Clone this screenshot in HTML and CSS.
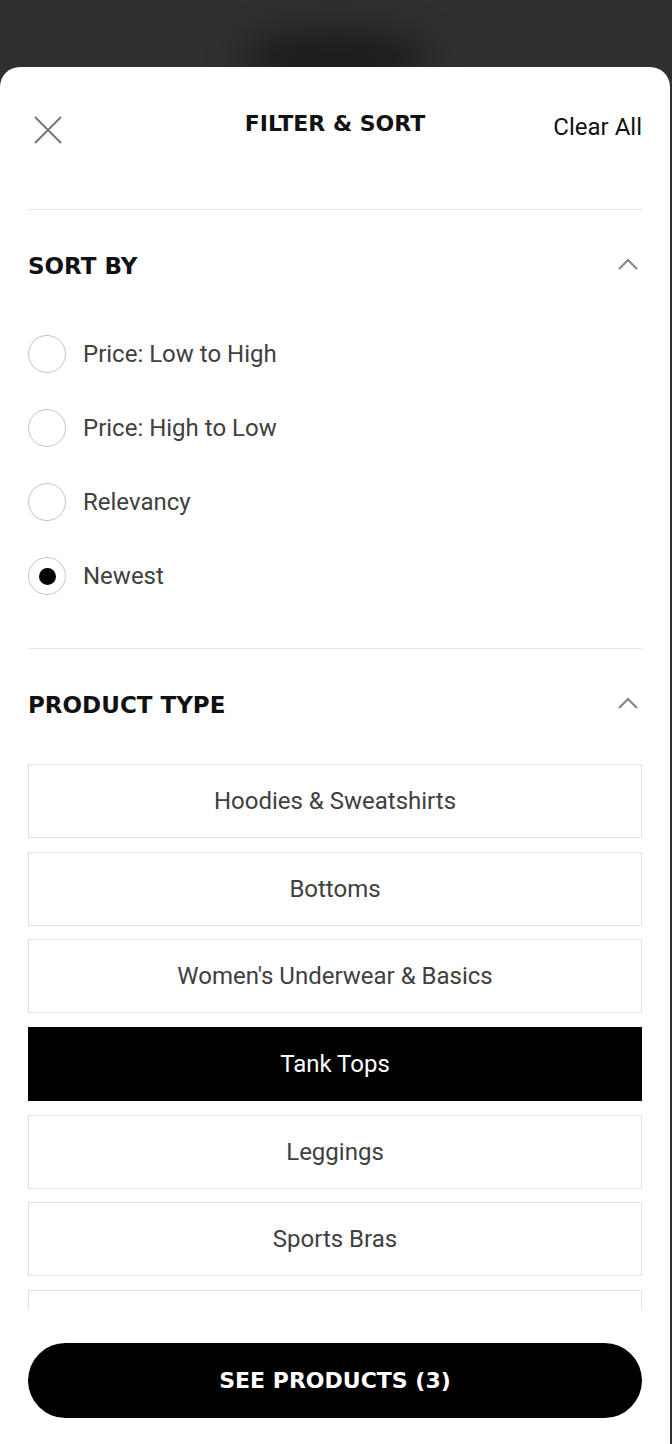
FILE: index.html
```html
<!DOCTYPE html>
<html lang="en">
<head>
    <meta charset="UTF-8">
    <meta name="viewport" content="width=device-width, initial-scale=1.0">
    <title>Filter &amp; Sort</title>
    <link rel="stylesheet" href="styles.css">
</head>
<body>

    <!-- Page behind the drawer -->
    <div class="backdrop">
        <div class="backdrop-shape"></div>
    </div>

    <!-- Filter drawer -->
    <div class="sheet">
        <div class="sheet-header">
            <button class="close-btn" aria-label="Close">
                <svg width="28" height="28" viewBox="0 0 28 28">
                    <path d="M1 1 L27 27 M27 1 L1 27" stroke="#777" stroke-width="2" fill="none"/>
                </svg>
            </button>
            <div class="sheet-title">FILTER &amp; SORT</div>
            <a class="clear-all" href="#">Clear All</a>
        </div>

        <div class="sheet-body">
            <!-- Sort -->
            <div class="section">
                <div class="section-head">
                    <span>SORT BY</span>
                    <svg class="chevron" width="20" height="12" viewBox="0 0 20 12">
                        <path d="M1 11 L10 2 L19 11" stroke="#888" stroke-width="2.2" fill="none"/>
                    </svg>
                </div>
                <ul class="radio-list">
                    <li class="radio-row"><span class="radio"></span>Price: Low to High</li>
                    <li class="radio-row"><span class="radio"></span>Price: High to Low</li>
                    <li class="radio-row"><span class="radio"></span>Relevancy</li>
                    <li class="radio-row"><span class="radio checked"></span>Newest</li>
                </ul>
            </div>

            <!-- Product type -->
            <div class="section section-last">
                <div class="section-head">
                    <span>PRODUCT TYPE</span>
                    <svg class="chevron" width="20" height="12" viewBox="0 0 20 12">
                        <path d="M1 11 L10 2 L19 11" stroke="#888" stroke-width="2.2" fill="none"/>
                    </svg>
                </div>
                <div class="type-list">
                    <div class="type-btn">Hoodies &amp; Sweatshirts</div>
                    <div class="type-btn">Bottoms</div>
                    <div class="type-btn">Women's Underwear &amp; Basics</div>
                    <div class="type-btn active">Tank Tops</div>
                    <div class="type-btn">Leggings</div>
                    <div class="type-btn">Sports Bras</div>
                    <div class="type-btn"></div>
                </div>
            </div>
        </div>

        <div class="sheet-footer">
            <button class="see-products">SEE PRODUCTS (3)</button>
        </div>
    </div>

</body>
</html>
```

FILE: styles.css
```css
* {
    box-sizing: border-box;
}

body {
    margin: 0;
    height: 1444px;
    background-color: #303030;
    font-family: Roboto, "Liberation Sans", Arial, sans-serif;
    overflow: hidden;
}

.backdrop {
    height: 67px;
    position: relative;
    overflow: hidden;
}

.backdrop-shape {
    position: absolute;
    left: 240px;
    top: 28px;
    width: 190px;
    height: 60px;
    border-radius: 50%;
    background-color: #1e1e1e;
    filter: blur(16px);
}

.sheet {
    width: 670px;
    height: 1377px;
    background-color: white;
    border-radius: 20px 20px 0 0;
    display: flex;
    flex-direction: column;
}

/* Header */
.sheet-header {
    height: 143px;
    margin: 0 28px;
    padding-top: 40px;
    border-bottom: 1px solid #e6e6e6;
    display: grid;
    grid-template-columns: 1fr auto 1fr;
    align-items: start;
}

.close-btn {
    justify-self: start;
    margin: 9px 0 0 6px;
    padding: 0;
    border: none;
    background: none;
    line-height: 0;
}

.sheet-title {
    font-family: "DejaVu Sans", sans-serif;
    font-weight: bold;
    font-size: 22px;
    color: #111;
    line-height: 34px;
}

.clear-all {
    justify-self: end;
    font-size: 24px;
    color: #111;
    text-decoration: none;
    line-height: 40px;
}

/* Scrolling body */
.sheet-body {
    flex: 1;
    overflow: hidden;
    padding: 0 28px;
}

.section {
    padding: 36px 0 35px;
    border-bottom: 1px solid #e6e6e6;
}

.section-last {
    border-bottom: none;
}

.section-head {
    height: 40px;
    display: flex;
    justify-content: space-between;
    align-items: center;
    font-family: "DejaVu Sans", sans-serif;
    font-weight: bold;
    font-size: 23px;
    color: #111;
}

.chevron {
    margin-right: 4px;
    margin-top: -4px;
}

.radio-list {
    list-style: none;
    margin: 31px 0 0;
    padding: 0;
}

.radio-row {
    height: 74px;
    display: flex;
    align-items: center;
    font-size: 24px;
    color: #404040;
}

.radio {
    width: 38px;
    height: 38px;
    border: 1.5px solid #c4c4c4;
    border-radius: 50%;
    margin-right: 17px;
    display: flex;
    align-items: center;
    justify-content: center;
}

.radio.checked::after {
    content: "";
    width: 17px;
    height: 17px;
    border-radius: 50%;
    background-color: black;
}

.type-list {
    margin-top: 39px;
    display: flex;
    flex-direction: column;
    gap: 13.7px;
}

.type-btn {
    height: 74px;
    border: 1.5px solid #e2e2e2;
    display: flex;
    align-items: center;
    justify-content: center;
    font-size: 24px;
    color: #404040;
    flex-shrink: 0;
}

.type-btn.active {
    background-color: black;
    border-color: black;
    color: white;
}

/* Footer */
.sheet-footer {
    height: 134px;
    padding: 33px 28px 0;
}

.see-products {
    width: 100%;
    height: 75px;
    border: none;
    border-radius: 38px;
    background-color: black;
    color: white;
    font-family: "DejaVu Sans", sans-serif;
    font-weight: bold;
    font-size: 22px;
    cursor: pointer;
}
```
